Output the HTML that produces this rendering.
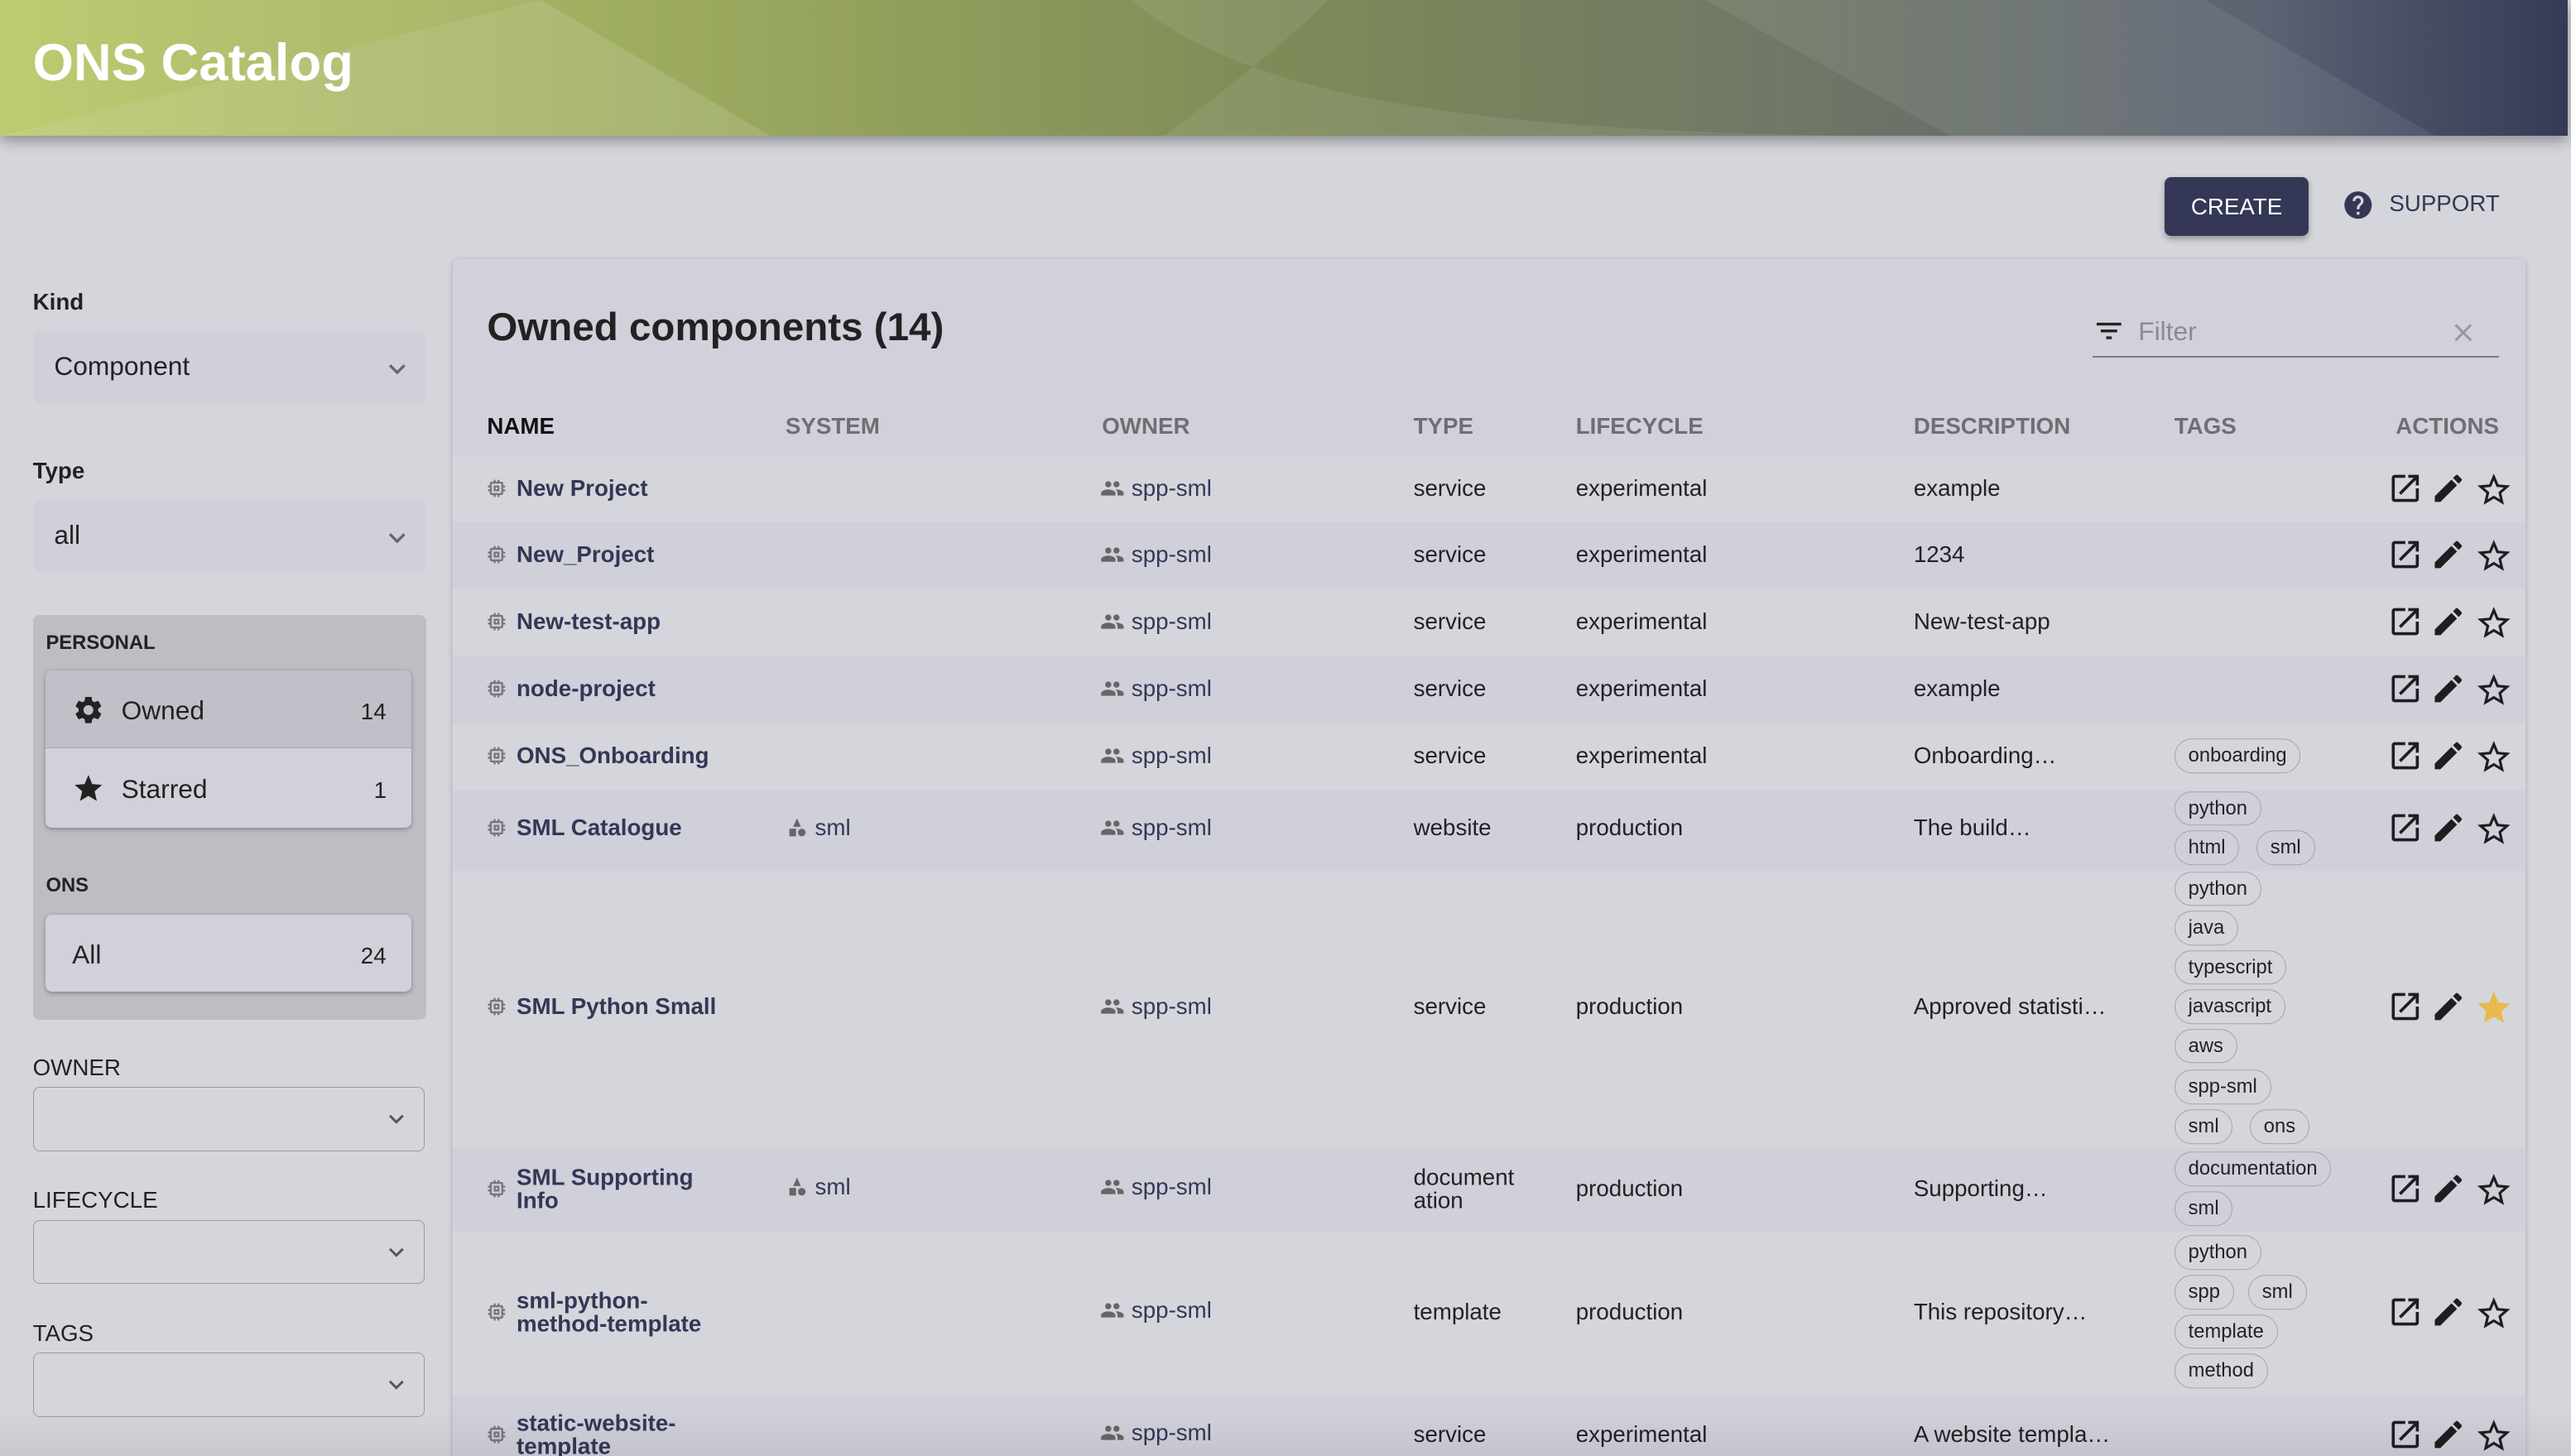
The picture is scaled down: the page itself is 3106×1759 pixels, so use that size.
<!DOCTYPE html>
<html><head><meta charset="utf-8">
<style>
html,body{margin:0;padding:0;overflow:hidden;background:#d5d6db}
#root{position:relative;width:1568px;height:888px;zoom:1.981;font-family:"Liberation Sans",sans-serif;background:#d5d6db;overflow:hidden}
.hdr{position:absolute;left:0;top:0;width:1566px;height:83px;overflow:hidden;background:linear-gradient(90deg,#b9c86a 0%,#9aa95e 28%,#7e8a58 50%,#6f7766 70%,#5c6372 88%,#363a58 100%);box-shadow:0 3px 8px rgba(0,0,0,.35)}
.hdr h1{position:absolute;left:20px;top:20px;margin:0;color:#fff;font-size:32px;font-weight:bold}
.ab{position:absolute}
.btn{position:absolute;left:1320px;top:108px;width:88px;height:36px;background:#343755;color:#fff;border-radius:4px;font-size:14px;text-align:center;line-height:36px;box-shadow:0 2px 4px rgba(0,0,0,.3)}
.sup{position:absolute;left:1430px;top:116px;font-size:14px;color:#343755}
.lbl{position:absolute;left:20px;font-size:14px;font-weight:bold;color:#222}
.sel{position:absolute;left:20px;width:240px;height:44px;background:#cfd0d9;border-radius:4px;font-size:16px;color:#222}
.sel span{position:absolute;left:13px;top:12px}
.out{position:absolute;left:20px;width:238px;height:38px;border:1px solid #9a9ba0;border-radius:4px}
.olbl{position:absolute;left:20px;font-size:14px;color:#222}
.chev{position:absolute;right:8px;top:13px}
.card{position:absolute;left:276px;top:158px;width:1264px;height:740px;background:#d0d1da;box-shadow:0 1px 4px rgba(0,0,0,.2);border-radius:4px}
.th{position:absolute;top:252px;font-size:14px;font-weight:bold;color:#6f6f73}
.row{position:absolute;left:276px;width:1264px}
.r1{background:#d5d6dc}.r2{background:#cfd0da}
.c{position:absolute;font-size:14px;color:#222;transform:translateY(-50%);line-height:14px}
.nm{font-weight:bold;color:#343755;left:39px}
.tag{position:absolute;left:1050px;height:20px;border:1px solid #a3a4aa;border-radius:12px;font-size:12px;color:#222;line-height:20px;padding:0 8px;transform:translateY(-50%)}
.act{position:absolute;left:1180px;transform:translateY(-50%);width:80px;height:22px}
.act svg{position:absolute;top:0}
</style></head><body><div id="root">
<div class="hdr">
<svg class="ab" style="left:0;top:0" width="1566" height="83"><path d="M330 0 L470 83 L0 83 Z" fill="rgba(255,255,255,0.08)"/><path d="M330 0 C380 30 420 60 470 83" stroke="none" fill="none"/><path d="M690 0 C760 60 900 83 1190 83 L1190 83 L710 83 C740 60 780 30 810 0Z" fill="rgba(255,255,255,0.08)"/><path d="M1040 0 L1190 83 L1485 83 L1345 0Z" fill="rgba(255,255,255,0.07)"/><path d="M0 0 L330 0 L470 83 L0 83Z" fill="rgba(255,255,255,0.06)"/></svg>
<h1>ONS Catalog</h1></div>
<div class="btn">CREATE</div>
<div class="sup"><svg style="position:absolute;left:-2px;top:-1px" width="20" height="20" viewBox="0 0 24 24"><path fill="#343755" d="M12 2C6.48 2 2 6.48 2 12s4.48 10 10 10 10-4.48 10-10S17.52 2 12 2zm1 17h-2v-2h2v2zm2.07-7.75l-.9.92C13.45 12.9 13 13.5 13 15h-2v-.5c0-1.1.45-2.1 1.17-2.83l1.24-1.26c.37-.36.59-.86.59-1.41 0-1.1-.9-2-2-2s-2 .9-2 2H8c0-2.21 1.79-4 4-4s4 1.79 4 4c0 .88-.36 1.68-.93 2.25z"/></svg><span style="margin-left:27px">SUPPORT</span></div>

<div class="lbl" style="top:176px">Kind</div>
<div class="sel" style="top:202px"><span>Component</span><svg class="chev" width="20" height="20" viewBox="0 0 24 24"><path fill="#666" d="M16.59 8.59L12 13.17 7.41 8.59 6 10l6 6 6-6z"/></svg></div>
<div class="lbl" style="top:279px">Type</div>
<div class="sel" style="top:305px"><span>all</span><svg class="chev" width="20" height="20" viewBox="0 0 24 24"><path fill="#666" d="M16.59 8.59L12 13.17 7.41 8.59 6 10l6 6 6-6z"/></svg></div>
<div class="ab" style="left:20px;top:375px;width:240px;height:247px;background:#bdbec4;border-radius:4px"></div>
<div class="ab" style="left:28px;top:385px;font-size:12px;font-weight:bold;color:#222">PERSONAL</div>
<div class="ab" style="left:28px;top:409px;width:223px;height:96px;background:#d0d1da;border-radius:4px;box-shadow:0 1px 3px rgba(0,0,0,.3);overflow:hidden">
 <div class="ab" style="left:0;top:0;width:223px;height:47px;background:#bfc0c8;border-bottom:1px solid #aaa"></div>
 <svg class="ab" style="left:16px;top:14px" width="20" height="20" viewBox="0 0 24 24"><path fill="#222" d="M19.14 12.94c.04-.3.06-.61.06-.94 0-.32-.02-.64-.07-.94l2.03-1.58a.49.49 0 00.12-.61l-1.92-3.32a.488.488 0 00-.59-.22l-2.39.96c-.5-.38-1.03-.7-1.62-.94l-.36-2.54a.484.484 0 00-.48-.41h-3.84c-.24 0-.43.17-.47.41l-.36 2.54c-.59.24-1.13.57-1.62.94l-2.39-.96c-.22-.08-.47 0-.59.22L2.74 8.87c-.12.21-.08.47.12.61l2.03 1.58c-.05.3-.09.63-.09.94s.02.64.07.94l-2.03 1.58a.49.49 0 00-.12.61l1.92 3.32c.12.22.37.29.59.22l2.39-.96c.5.38 1.03.7 1.62.94l.36 2.54c.05.24.24.41.48.41h3.84c.24 0 .44-.17.47-.41l.36-2.54c.59-.24 1.13-.56 1.62-.94l2.39.96c.22.08.47 0 .59-.22l1.92-3.32c.12-.22.07-.47-.12-.61l-2.01-1.58zM12 15.6c-1.98 0-3.6-1.62-3.6-3.6s1.62-3.6 3.6-3.6 3.6 1.62 3.6 3.6-1.62 3.6-3.6 3.6z"/></svg>
 <div class="ab" style="left:46px;top:15px;font-size:16px;color:#222">Owned</div><div class="ab" style="left:192px;top:17px;font-size:14px;color:#222">14</div>
 <svg class="ab" style="left:16px;top:62px" width="20" height="20" viewBox="0 0 24 24"><path fill="#222" d="M12 17.27L18.18 21l-1.64-7.03L22 9.24l-7.19-.62L12 2 9.19 8.63 2 9.24l5.46 4.73L5.82 21z"/></svg>
 <div class="ab" style="left:46px;top:63px;font-size:16px;color:#222">Starred</div><div class="ab" style="left:200px;top:65px;font-size:14px;color:#222">1</div>
</div>
<div class="ab" style="left:28px;top:533px;font-size:12px;font-weight:bold;color:#222">ONS</div>
<div class="ab" style="left:28px;top:558px;width:223px;height:47px;background:#d0d1da;border-radius:4px;box-shadow:0 1px 3px rgba(0,0,0,.3)">
 <div class="ab" style="left:16px;top:15px;font-size:16px;color:#222">All</div><div class="ab" style="left:192px;top:17px;font-size:14px;color:#222">24</div></div>
<div class="olbl" style="top:643px">OWNER</div>
<div class="out" style="top:663px"><svg class="chev" style="top:10px" width="18" height="18" viewBox="0 0 24 24"><path fill="#555" d="M16.59 8.59L12 13.17 7.41 8.59 6 10l6 6 6-6z"/></svg></div>
<div class="olbl" style="top:724px">LIFECYCLE</div>
<div class="out" style="top:744px"><svg class="chev" style="top:10px" width="18" height="18" viewBox="0 0 24 24"><path fill="#555" d="M16.59 8.59L12 13.17 7.41 8.59 6 10l6 6 6-6z"/></svg></div>
<div class="olbl" style="top:805px">TAGS</div>
<div class="out" style="top:825px"><svg class="chev" style="top:10px" width="18" height="18" viewBox="0 0 24 24"><path fill="#555" d="M16.59 8.59L12 13.17 7.41 8.59 6 10l6 6 6-6z"/></svg></div>

<div class="card"></div>
<div class="ab" style="left:297px;top:186px;font-size:24px;font-weight:bold;color:#222">Owned components (14)</div>
<svg class="ab" style="left:1276px;top:192px" width="20" height="20" viewBox="0 0 24 24"><path fill="#222" d="M10 18h4v-2h-4v2zM3 6v2h18V6H3zm3 7h12v-2H6v2z"/></svg>
<div class="ab" style="left:1304px;top:193px;font-size:16px;color:#8a8a90">Filter</div>
<svg class="ab" style="left:1493px;top:194px" width="18" height="18" viewBox="0 0 24 24"><path fill="#999" d="M19 6.41L17.59 5 12 10.59 6.41 5 5 6.41 10.59 12 5 17.59 6.41 19 12 13.41 17.59 19 19 17.59 13.41 12z"/></svg>
<div class="ab" style="left:1276px;top:217px;width:248px;height:1px;background:#7a7a80"></div>

<div class="th" style="left:297px;color:#111">NAME</div><div class="th" style="left:479px">SYSTEM</div><div class="th" style="left:672px">OWNER</div><div class="th" style="left:862px">TYPE</div><div class="th" style="left:961px">LIFECYCLE</div><div class="th" style="left:1167px">DESCRIPTION</div><div class="th" style="left:1326px">TAGS</div><div class="th" style="left:1461px">ACTIONS</div>

<svg width="0" height="0" style="position:absolute"><defs>
<symbol id="chip" viewBox="0 0 24 24"><path fill="#777" d="M15 9H9v6h6V9zm-2 4h-2v-2h2v2zm8-2V9h-2V7c0-1.1-.9-2-2-2h-2V3h-2v2h-2V3H9v2H7c-1.1 0-2 .9-2 2v2H3v2h2v2H3v2h2v2c0 1.1.9 2 2 2h2v2h2v-2h2v2h2v-2h2c1.1 0 2-.9 2-2v-2h2v-2h-2v-2h2zm-4 6H7V7h10v10z"/></symbol>
<symbol id="ppl" viewBox="0 0 24 24"><path fill="#666" d="M16 11c1.66 0 2.99-1.34 2.99-3S17.66 5 16 5c-1.66 0-3 1.34-3 3s1.34 3 3 3zm-8 0c1.66 0 2.99-1.34 2.99-3S9.66 5 8 5C6.34 5 5 6.34 5 8s1.34 3 3 3zm0 2c-2.33 0-7 1.17-7 3.5V19h14v-2.5c0-2.33-4.67-3.5-7-3.5zm8 0c-.29 0-.62.02-.97.05 1.16.84 1.97 1.97 1.97 3.45V19h6v-2.5c0-2.33-4.67-3.5-7-3.5z"/></symbol>
<symbol id="sys" viewBox="0 0 24 24"><path fill="#666" d="M12 2l-4 9h8z"/><rect x="4" y="13" width="7" height="8" fill="#666"/><circle cx="17" cy="17" r="4" fill="#666"/></symbol>
<symbol id="open" viewBox="0 0 24 24"><path fill="#1e1e1e" d="M19 19H5V5h7V3H5c-1.11 0-2 .9-2 2v14c0 1.1.89 2 2 2h14c1.1 0 2-.9 2-2v-7h-2v7zM14 3v2h3.59l-9.83 9.83 1.41 1.41L19 6.41V10h2V3h-7z"/></symbol>
<symbol id="edit" viewBox="0 0 24 24"><path fill="#1e1e1e" d="M3 17.25V21h3.75L17.81 9.94l-3.75-3.75L3 17.25zM20.71 7.04c.39-.39.39-1.02 0-1.41l-2.34-2.34c-.39-.39-1.02-.39-1.41 0l-1.83 1.83 3.75 3.75 1.83-1.83z"/></symbol>
<symbol id="stb" viewBox="0 0 24 24"><path fill="#1e1e1e" d="M22 9.24l-7.19-.62L12 2 9.19 8.63 2 9.24l5.46 4.73L5.82 21 12 17.27 18.18 21l-1.64-7.03L22 9.24zM12 15.4l-3.76 2.27 1-4.28-3.32-2.88 4.38-.38L12 6.1l1.71 4.04 4.38.38-3.32 2.88 1 4.28L12 15.4z"/></symbol>
<symbol id="stf" viewBox="0 0 24 24"><path fill="#e9b949" d="M12 17.27L18.18 21l-1.64-7.03L22 9.24l-7.19-.62L12 2 9.19 8.63 2 9.24l5.46 4.73L5.82 21z"/></symbol>
</defs></svg>

<!-- rows: top/height; center = height/2 -->
<div class="row r1" style="top:278px;height:40px">
 <svg class="c" style="left:20px;top:20px" width="14" height="14"><use href="#chip"/></svg><div class="c nm" style="top:20px">New Project</div>
 <svg class="c" style="left:395px;top:20px" width="15" height="15"><use href="#ppl"/></svg><div class="c" style="left:414px;top:20px;color:#343755">spp-sml</div>
 <div class="c" style="left:586px;top:20px">service</div><div class="c" style="left:685px;top:20px">experimental</div><div class="c" style="left:891px;top:20px">example</div>
 <div class="act" style="top:20px"><svg style="left:0" width="22" height="22"><use href="#open"/></svg><svg style="left:26px" width="22" height="22"><use href="#edit"/></svg><svg style="left:53px" width="24" height="24"><use href="#stb"/></svg></div></div>
<div class="row r2" style="top:318px;height:41px">
 <svg class="c" style="left:20px;top:20px" width="14" height="14"><use href="#chip"/></svg><div class="c nm" style="top:20px">New_Project</div>
 <svg class="c" style="left:395px;top:20px" width="15" height="15"><use href="#ppl"/></svg><div class="c" style="left:414px;top:20px;color:#343755">spp-sml</div>
 <div class="c" style="left:586px;top:20px">service</div><div class="c" style="left:685px;top:20px">experimental</div><div class="c" style="left:891px;top:20px">1234</div>
 <div class="act" style="top:20px"><svg style="left:0" width="22" height="22"><use href="#open"/></svg><svg style="left:26px" width="22" height="22"><use href="#edit"/></svg><svg style="left:53px" width="24" height="24"><use href="#stb"/></svg></div></div>
<div class="row r1" style="top:359px;height:41px">
 <svg class="c" style="left:20px;top:20px" width="14" height="14"><use href="#chip"/></svg><div class="c nm" style="top:20px">New-test-app</div>
 <svg class="c" style="left:395px;top:20px" width="15" height="15"><use href="#ppl"/></svg><div class="c" style="left:414px;top:20px;color:#343755">spp-sml</div>
 <div class="c" style="left:586px;top:20px">service</div><div class="c" style="left:685px;top:20px">experimental</div><div class="c" style="left:891px;top:20px">New-test-app</div>
 <div class="act" style="top:20px"><svg style="left:0" width="22" height="22"><use href="#open"/></svg><svg style="left:26px" width="22" height="22"><use href="#edit"/></svg><svg style="left:53px" width="24" height="24"><use href="#stb"/></svg></div></div>
<div class="row r2" style="top:400px;height:41px">
 <svg class="c" style="left:20px;top:20px" width="14" height="14"><use href="#chip"/></svg><div class="c nm" style="top:20px">node-project</div>
 <svg class="c" style="left:395px;top:20px" width="15" height="15"><use href="#ppl"/></svg><div class="c" style="left:414px;top:20px;color:#343755">spp-sml</div>
 <div class="c" style="left:586px;top:20px">service</div><div class="c" style="left:685px;top:20px">experimental</div><div class="c" style="left:891px;top:20px">example</div>
 <div class="act" style="top:20px"><svg style="left:0" width="22" height="22"><use href="#open"/></svg><svg style="left:26px" width="22" height="22"><use href="#edit"/></svg><svg style="left:53px" width="24" height="24"><use href="#stb"/></svg></div></div>
<div class="row r1" style="top:441px;height:41px">
 <svg class="c" style="left:20px;top:20px" width="14" height="14"><use href="#chip"/></svg><div class="c nm" style="top:20px">ONS_Onboarding</div>
 <svg class="c" style="left:395px;top:20px" width="15" height="15"><use href="#ppl"/></svg><div class="c" style="left:414px;top:20px;color:#343755">spp-sml</div>
 <div class="c" style="left:586px;top:20px">service</div><div class="c" style="left:685px;top:20px">experimental</div><div class="c" style="left:891px;top:20px">Onboarding…</div>
 <div class="tag" style="top:20px">onboarding</div>
 <div class="act" style="top:20px"><svg style="left:0" width="22" height="22"><use href="#open"/></svg><svg style="left:26px" width="22" height="22"><use href="#edit"/></svg><svg style="left:53px" width="24" height="24"><use href="#stb"/></svg></div></div>
<div class="row r2" style="top:482px;height:49px">
 <svg class="c" style="left:20px;top:23px" width="14" height="14"><use href="#chip"/></svg><div class="c nm" style="top:23px">SML Catalogue</div>
 <svg class="c" style="left:203px;top:23px" width="14" height="14"><use href="#sys"/></svg><div class="c" style="left:221px;top:23px;color:#343755">sml</div>
 <svg class="c" style="left:395px;top:23px" width="15" height="15"><use href="#ppl"/></svg><div class="c" style="left:414px;top:23px;color:#343755">spp-sml</div>
 <div class="c" style="left:586px;top:23px">website</div><div class="c" style="left:685px;top:23px">production</div><div class="c" style="left:891px;top:23px">The build…</div>
 <div class="tag" style="top:11px">python</div><div class="tag" style="top:35px">html</div><div class="tag" style="top:35px;left:1100px">sml</div>
 <div class="act" style="top:23px"><svg style="left:0" width="22" height="22"><use href="#open"/></svg><svg style="left:26px" width="22" height="22"><use href="#edit"/></svg><svg style="left:53px" width="24" height="24"><use href="#stb"/></svg></div></div>
<div class="row r1" style="top:531px;height:169px">
 <svg class="c" style="left:20px;top:83px" width="14" height="14"><use href="#chip"/></svg><div class="c nm" style="top:83px">SML Python Small</div>
 <svg class="c" style="left:395px;top:83px" width="15" height="15"><use href="#ppl"/></svg><div class="c" style="left:414px;top:83px;color:#343755">spp-sml</div>
 <div class="c" style="left:586px;top:83px">service</div><div class="c" style="left:685px;top:83px">production</div><div class="c" style="left:891px;top:83px">Approved statisti…</div>
 <div class="tag" style="top:11px">python</div><div class="tag" style="top:35px">java</div><div class="tag" style="top:59px">typescript</div><div class="tag" style="top:83px">javascript</div><div class="tag" style="top:107px">aws</div><div class="tag" style="top:132px">spp-sml</div><div class="tag" style="top:156px">sml</div><div class="tag" style="top:156px;left:1096px">ons</div>
 <div class="act" style="top:83px"><svg style="left:0" width="22" height="22"><use href="#open"/></svg><svg style="left:26px" width="22" height="22"><use href="#edit"/></svg><svg style="left:53px" width="24" height="24"><use href="#stf"/></svg></div></div>
<div class="row r2" style="top:700px;height:51px">
 <svg class="c" style="left:20px;top:25px" width="14" height="14"><use href="#chip"/></svg><div class="c nm" style="top:25px">SML Supporting<br>Info</div>
 <svg class="c" style="left:203px;top:24px" width="14" height="14"><use href="#sys"/></svg><div class="c" style="left:221px;top:24px;color:#343755">sml</div>
 <svg class="c" style="left:395px;top:24px" width="15" height="15"><use href="#ppl"/></svg><div class="c" style="left:414px;top:24px;color:#343755">spp-sml</div>
 <div class="c" style="left:586px;top:25px">document<br>ation</div><div class="c" style="left:685px;top:25px">production</div><div class="c" style="left:891px;top:25px">Supporting…</div>
 <div class="tag" style="top:13px">documentation</div><div class="tag" style="top:37px">sml</div>
 <div class="act" style="top:25px"><svg style="left:0" width="22" height="22"><use href="#open"/></svg><svg style="left:26px" width="22" height="22"><use href="#edit"/></svg><svg style="left:53px" width="24" height="24"><use href="#stb"/></svg></div></div>
<div class="row r1" style="top:751px;height:100px">
 <svg class="c" style="left:20px;top:49px" width="14" height="14"><use href="#chip"/></svg><div class="c nm" style="top:49px">sml-python-<br>method-template</div>
 <svg class="c" style="left:395px;top:48px" width="15" height="15"><use href="#ppl"/></svg><div class="c" style="left:414px;top:48px;color:#343755">spp-sml</div>
 <div class="c" style="left:586px;top:49px">template</div><div class="c" style="left:685px;top:49px">production</div><div class="c" style="left:891px;top:49px">This repository…</div>
 <div class="tag" style="top:13px">python</div><div class="tag" style="top:37px">spp</div><div class="tag" style="top:37px;left:1095px">sml</div><div class="tag" style="top:61px">template</div><div class="tag" style="top:85px">method</div>
 <div class="act" style="top:49px"><svg style="left:0" width="22" height="22"><use href="#open"/></svg><svg style="left:26px" width="22" height="22"><use href="#edit"/></svg><svg style="left:53px" width="24" height="24"><use href="#stb"/></svg></div></div>
<div class="row r2" style="top:851px;height:50px">
 <svg class="c" style="left:20px;top:24px" width="14" height="14"><use href="#chip"/></svg><div class="c nm" style="top:24px">static-website-<br>template</div>
 <svg class="c" style="left:395px;top:23px" width="15" height="15"><use href="#ppl"/></svg><div class="c" style="left:414px;top:23px;color:#343755">spp-sml</div>
 <div class="c" style="left:586px;top:24px">service</div><div class="c" style="left:685px;top:24px">experimental</div><div class="c" style="left:891px;top:24px">A website templa…</div>
 <div class="act" style="top:24px"><svg style="left:0" width="22" height="22"><use href="#open"/></svg><svg style="left:26px" width="22" height="22"><use href="#edit"/></svg><svg style="left:53px" width="24" height="24"><use href="#stb"/></svg></div></div>
<div class="ab" style="left:0;top:860px;width:1568px;height:28px;background:linear-gradient(180deg,rgba(0,0,0,0),rgba(0,0,0,.06))"></div>
</div></body></html>
